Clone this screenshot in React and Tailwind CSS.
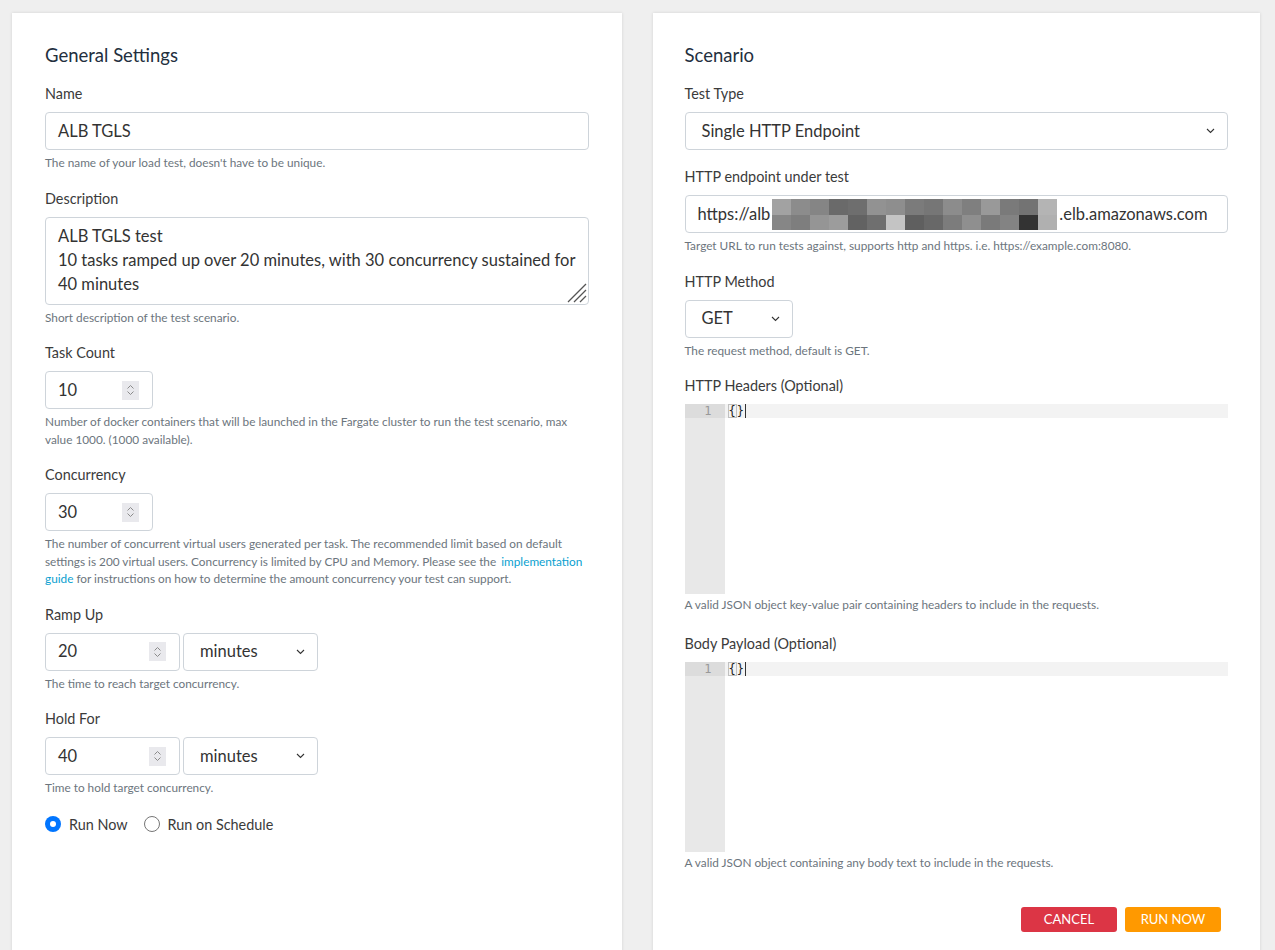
import React from 'react';

function Label({ children }) {
  return <label className="mb-2 block text-[14.4px] leading-5 text-[#3b3b3b]">{children}</label>;
}

function Help({ children, className = 'mt-1' }) {
  return <p className={`${className} text-[11.8px] leading-[17.5px] text-[#6c757d]`}>{children}</p>;
}

function Chevron() {
  return (
    <svg width="9" height="6" viewBox="0 0 9 6" className="shrink-0">
      <path d="M1 1l3.5 3.5L8 1" fill="none" stroke="#333" strokeWidth="1.1" />
    </svg>
  );
}

function Spinner() {
  return (
    <div className="flex h-[19px] w-[17px] flex-col items-center justify-center gap-[2px] bg-[#e9e9ed]">
      <svg width="7" height="4" viewBox="0 0 7 4">
        <path d="M.5 3.5l3-3 3 3" fill="none" stroke="#8a8a8a" strokeWidth="1" />
      </svg>
      <svg width="7" height="4" viewBox="0 0 7 4">
        <path d="M.5.5l3 3 3-3" fill="none" stroke="#8a8a8a" strokeWidth="1" />
      </svg>
    </div>
  );
}

function NumberInput({ value, width }) {
  return (
    <div className={`flex h-[38px] items-center justify-between rounded border border-[#ced4da] bg-white pl-3 pr-[13px] text-[16.5px] text-[#333] ${width}`}>
      <span>{value}</span>
      <Spinner />
    </div>
  );
}

function Select({ value, width }) {
  return (
    <div className={`flex h-[38px] items-center justify-between rounded border border-[#ced4da] bg-white pl-4 pr-[12px] text-[16.5px] text-[#333] ${width}`}>
      <span>{value}</span>
      <Chevron />
    </div>
  );
}

function TextInput({ children }) {
  return (
    <div className="flex h-[38px] w-full items-center rounded border border-[#ced4da] bg-white px-3 text-[16.5px] text-[#333]">
      {children}
    </div>
  );
}

const mosaicTop = [
  'bg-[#a2a2a2]', 'bg-[#8c8c8c]', 'bg-[#858585]', 'bg-[#6a6a6a]', 'bg-[#6e6e6e]', 'bg-[#929292]',
  'bg-[#8e8e8e]', 'bg-[#7b7b7b]', 'bg-[#767676]', 'bg-[#8c8c8c]', 'bg-[#7f7f7f]', 'bg-[#999999]',
  'bg-[#7a7a7a]', 'bg-[#737373]', 'bg-[#b4b4b4]',
];
const mosaicBottom = [
  'bg-[#868686]', 'bg-[#7e7e7e]', 'bg-[#959595]', 'bg-[#9c9c9c]', 'bg-[#626262]', 'bg-[#6f6f6f]',
  'bg-[#c4c4c4]', 'bg-[#5f5f5f]', 'bg-[#686868]', 'bg-[#7c7c7c]', 'bg-[#8f8f8f]', 'bg-[#7a7a7a]',
  'bg-[#838383]', 'bg-[#333333]', 'bg-[#b0b0b0]',
];

function Mosaic() {
  return (
    <span className="mx-[2px] inline-flex h-[31px] flex-col">
      <span className="flex h-[16px]">
        {mosaicTop.map((c, i) => (
          <span key={i} className={`h-full w-[19px] ${c}`} />
        ))}
      </span>
      <span className="flex h-[15px]">
        {mosaicBottom.map((c, i) => (
          <span key={i} className={`h-full w-[19px] ${c}`} />
        ))}
      </span>
    </span>
  );
}

function CodeEditor() {
  return (
    <div className="flex h-[190px] w-full bg-white [font-family:'DejaVu_Sans_Mono',monospace] text-[12px]">
      <div className="w-[40px] shrink-0 bg-[#e8e8e8]">
        <div className="h-[14px] bg-[#dcdcdc] pr-[13px] text-right leading-[14px] text-[#999]">1</div>
      </div>
      <div className="flex-1">
        <div className="flex h-[14px] items-center bg-[#f3f3f3] pl-[3px] leading-[14px] text-[#222]">
          <span className="border border-[#c0c0c0] leading-[12px]">{'{'}</span>
          <span className="leading-[12px]">{'}'}</span>
          <span className="ml-px h-[14px] w-px bg-[#333]" />
        </div>
      </div>
    </div>
  );
}

function Radio({ checked, label }) {
  return (
    <span className="flex items-center gap-2">
      {checked ? (
        <span className="flex h-4 w-4 items-center justify-center rounded-full bg-[#0075ff]">
          <span className="h-[6px] w-[6px] rounded-full bg-white" />
        </span>
      ) : (
        <span className="h-4 w-4 rounded-full border border-[#767676] bg-white" />
      )}
      <span className="text-[14.4px] text-[#3b3b3b]">{label}</span>
    </span>
  );
}

function Field({ label, help, children }) {
  return (
    <div className="mb-[17px]">
      <Label>{label}</Label>
      {children}
      {help && <Help>{help}</Help>}
    </div>
  );
}

export default function App() {
  return (
    <div className="min-h-[950px] bg-[#efefef] [font-family:Lato,sans-serif]">
      <div className="flex gap-[31px] pl-[12px] pr-[15px] pt-[13px]">
        <div className="min-h-[960px] flex-1 bg-white px-[33px] pt-[31px] shadow-[0_0_3px_rgba(0,0,0,0.12)]">
          <h2 className="mb-[18px] text-[18.5px] leading-[22px] text-[#232f3e]">General Settings</h2>

          <Field label="Name" help="The name of your load test, doesn't have to be unique.">
            <TextInput>ALB TGLS</TextInput>
          </Field>

          <Field label="Description" help="Short description of the test scenario.">
            <div className="relative h-[88px] w-full rounded border border-[#ced4da] bg-white px-3 py-[6px] text-[16.5px] leading-6 text-[#333]">
              <div>ALB TGLS test</div>
              <div>10 tasks ramped up over 20 minutes, with 30 concurrency sustained for 40 minutes</div>
              <svg width="22" height="22" viewBox="0 0 22 22" className="absolute bottom-px right-px">
                <path d="M21 3L3 21M21 9L9 21M21 15L15 21" stroke="#555" strokeWidth="1.3" />
              </svg>
            </div>
          </Field>

          <Field
            label="Task Count"
            help="Number of docker containers that will be launched in the Fargate cluster to run the test scenario, max value 1000. (1000 available)."
          >
            <NumberInput value="10" width="w-[108px]" />
          </Field>

          <Field
            label="Concurrency"
            help={
              <>
                The number of concurrent virtual users generated per task. The recommended limit based on default settings is 200 virtual users. Concurrency is limited by CPU and Memory. Please see the{' '}
                <a className="pl-[2px] text-[#0a9fd0]" href="#">implementation guide</a> for instructions on how to determine the amount concurrency your test can support.
              </>
            }
          >
            <NumberInput value="30" width="w-[108px]" />
          </Field>

          <Field label="Ramp Up" help="The time to reach target concurrency.">
            <div className="flex gap-[3px]">
              <NumberInput value="20" width="w-[135px]" />
              <Select value="minutes" width="w-[135px]" />
            </div>
          </Field>

          <Field label="Hold For" help="Time to hold target concurrency.">
            <div className="flex gap-[3px]">
              <NumberInput value="40" width="w-[135px]" />
              <Select value="minutes" width="w-[135px]" />
            </div>
          </Field>

          <div className="flex items-center gap-4">
            <Radio checked label="Run Now" />
            <Radio label="Run on Schedule" />
          </div>
        </div>

        <div className="min-h-[960px] flex-1 bg-white px-[32px] pt-[31px] shadow-[0_0_3px_rgba(0,0,0,0.12)]">
          <h2 className="mb-[18px] text-[18.5px] leading-[22px] text-[#232f3e]">Scenario</h2>

          <Field label="Test Type">
            <Select value="Single HTTP Endpoint" width="w-full" />
          </Field>

          <Field
            label="HTTP endpoint under test"
            help="Target URL to run tests against, supports http and https. i.e. https://example.com:8080."
          >
            <TextInput>
              <span>https://alb</span>
              <Mosaic />
              <span>.elb.amazonaws.com</span>
            </TextInput>
          </Field>

          <Field label="HTTP Method" help="The request method, default is GET.">
            <Select value="GET" width="w-[108px]" />
          </Field>

          <div className="mb-[20px] mt-[2px]">
            <Label>HTTP Headers (Optional)</Label>
            <CodeEditor />
            <Help className="mt-[2px]">
              A valid JSON object key-value pair containing headers to include in the requests.
            </Help>
          </div>

          <div>
            <Label>Body Payload (Optional)</Label>
            <CodeEditor />
            <Help className="mt-[2px]">
              A valid JSON object containing any body text to include in the requests.
            </Help>
          </div>

          <div className="mt-[36px] flex justify-end gap-2 pr-[7px]">
            <button className="h-[25px] w-[96px] rounded-[3px] bg-[#dc3545] text-[13px] text-white">CANCEL</button>
            <button className="h-[25px] w-[96px] rounded-[3px] bg-[#ff9900] text-[13px] text-white">RUN NOW</button>
          </div>
        </div>
      </div>
    </div>
  );
}
